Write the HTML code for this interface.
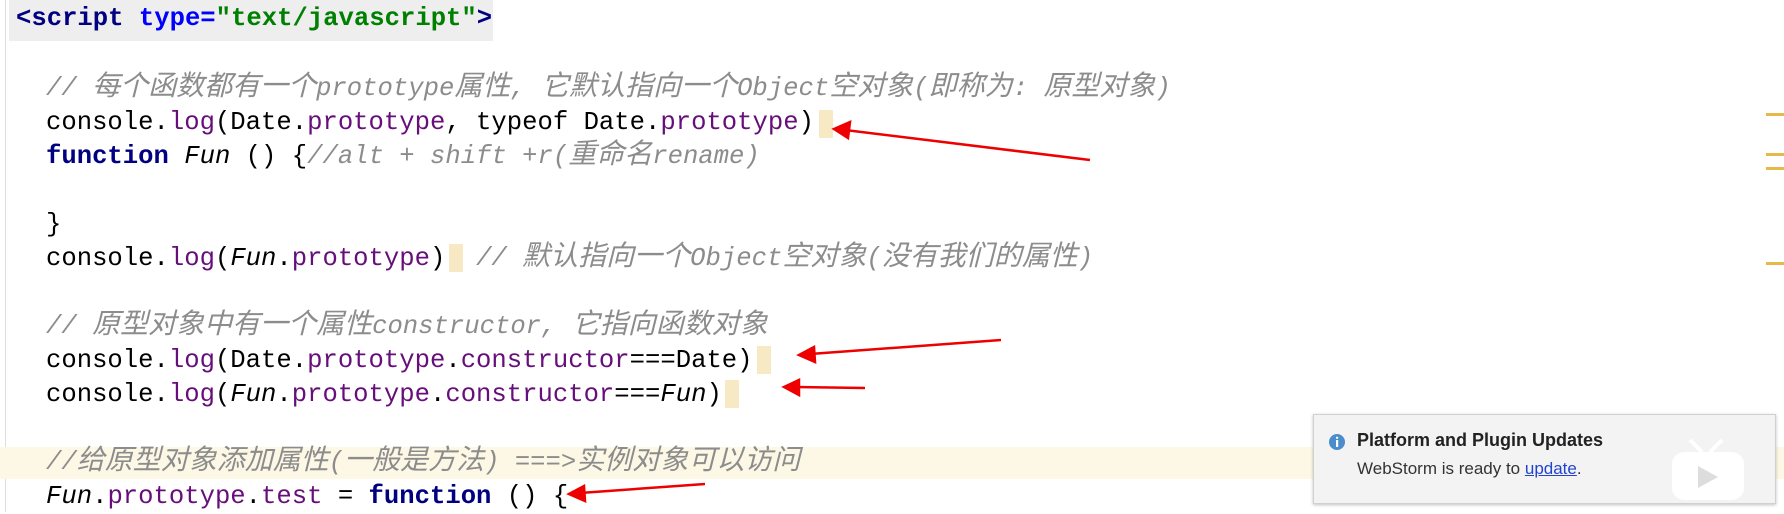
<!DOCTYPE html>
<html><head><meta charset="utf-8"><style>
body{margin:0;width:1784px;height:512px;background:#fff;position:relative;overflow:hidden}
.gut{position:absolute;left:5px;top:0;width:1px;height:512px;background:#ddd}
.hl{position:absolute;left:0;top:447px;width:1784px;height:32px;background:#fdf8e6}
.sb{position:absolute;left:9px;top:0;width:484px;height:41px;background:#eeeeee}
.code{position:absolute;left:46px;top:4px;font-family:"Liberation Mono","Noto Sans CJK SC",monospace;font-size:25.6px;line-height:34px;white-space:pre;color:#000}
.k{color:#000080;font-weight:bold}
.p{color:#660e7a}
.c{color:#8c8c8c;font-style:italic}
.z{font-size:28px}
.s{color:#008000;font-weight:bold}
.i{font-style:italic}
.car{position:absolute;width:14px;height:28px;background:#f7e9c4}
.mk{position:absolute;right:0;width:18px;height:3px;background:#e8b84a}
.note{position:absolute;left:1313px;top:414px;width:461px;height:88px;background:#f3f3f3;border:1px solid #d0d0d0;box-shadow:0 1px 3px rgba(0,0,0,.25);font-family:"Liberation Sans",sans-serif}
</style></head><body>
<div class="gut"></div>
<div class="hl"></div>
<div class="sb"></div>
<div class="car" style="left:819px;top:110px"></div>
<div class="car" style="left:449px;top:244px"></div>
<div class="car" style="left:757px;top:346px"></div>
<div class="car" style="left:725px;top:380px"></div>
<div class="mk" style="top:113px"></div>
<div class="mk" style="top:153px"></div>
<div class="mk" style="top:167px"></div>
<div class="mk" style="top:262px"></div>
<div class="code" style="left:16px;top:2px"><span class="k">&lt;script</span> <span style="color:#0000ff;font-weight:bold">type=</span><span class="s">"text/javascript"</span><span class="k">&gt;</span></div>
<div class="code" style="top:38px">
<span class="c">// <span class="z">每个函数都有一个</span>prototype<span class="z">属性</span>, <span class="z">它默认指向一个</span>Object<span class="z">空对象</span>(<span class="z">即称为</span>: <span class="z">原型对象</span>)</span>
console.<span class="p">log</span>(Date.<span class="p">prototype</span>, typeof Date.<span class="p">prototype</span>)
<span class="k">function</span> <span class="i">Fun</span> () {<span class="c">//alt + shift +r(<span class="z">重命名</span>rename)</span>

}
console.<span class="p">log</span>(<span class="i">Fun</span>.<span class="p">prototype</span>)  <span class="c">// <span class="z">默认指向一个</span>Object<span class="z">空对象</span>(<span class="z">没有我们的属性</span>)</span>

<span class="c">// <span class="z">原型对象中有一个属性</span>constructor, <span class="z">它指向函数对象</span></span>
console.<span class="p">log</span>(Date.<span class="p">prototype</span>.<span class="p">constructor</span>===Date)
console.<span class="p">log</span>(<span class="i">Fun</span>.<span class="p">prototype</span>.<span class="p">constructor</span>===<span class="i">Fun</span>)

<span class="c">//<span class="z">给原型对象添加属性</span>(<span class="z">一般是方法</span>) ===&gt;<span class="z">实例对象可以访问</span></span>
<span class="i">Fun</span>.<span class="p">prototype</span>.<span class="p">test</span> = <span class="k">function</span> () {</div>
<svg width="1784" height="512" style="position:absolute;left:0;top:0">
<g stroke="#e00" stroke-width="2.5" fill="#e00">
<line x1="1090" y1="160" x2="845" y2="130"/><polygon points="834,129 850,122 848,138"/>
<line x1="1001" y1="340" x2="810" y2="354"/><polygon points="799,355 814,347 815,362"/>
<line x1="865" y1="388" x2="795" y2="387"/><polygon points="784,387 799,380 799,395"/>
<line x1="705" y1="484" x2="580" y2="493"/><polygon points="569,494 584,486 585,501"/>
</g></svg>
<div class="note">
<svg width="18" height="18" style="position:absolute;left:14px;top:18px"><circle cx="9" cy="9" r="8" fill="#4a8ccc"/><rect x="8" y="7" width="2.2" height="7" fill="#fff"/><circle cx="9.1" cy="4.8" r="1.2" fill="#fff"/></svg>
<div style="position:absolute;left:43px;top:15px;font-size:18px;font-weight:bold;color:#222">Platform and Plugin Updates</div>
<div style="position:absolute;left:43px;top:44px;font-size:17px;color:#333">WebStorm is ready to <span style="color:#2244cc;text-decoration:underline">update</span>.</div>
<svg width="76" height="64" style="position:absolute;left:356px;top:23px"><line x1="20" y1="2" x2="32" y2="14" stroke="#fff" stroke-width="4"/><line x1="52" y1="2" x2="40" y2="14" stroke="#fff" stroke-width="4"/><rect x="2" y="14" width="72" height="48" rx="12" fill="#fff"/><polygon points="28,28 28,50 48,39" fill="#ddd"/></svg>
</div>
</body></html>
